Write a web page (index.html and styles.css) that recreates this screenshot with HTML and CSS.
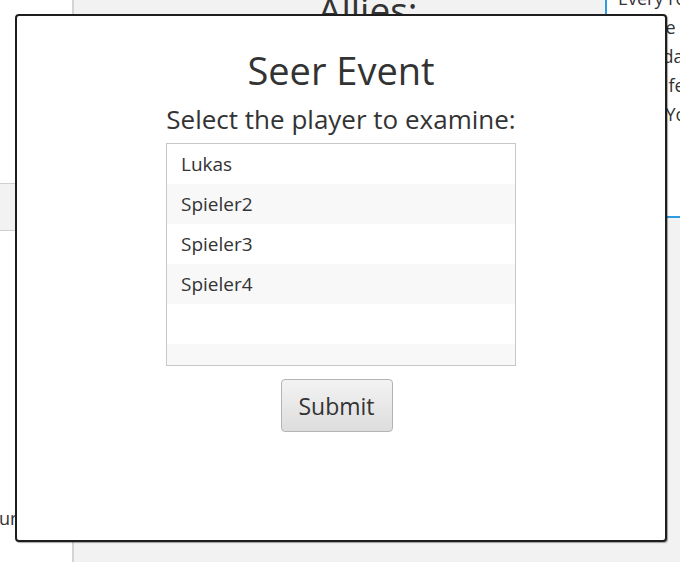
FILE: index.html
```html
<!DOCTYPE html>
<html>
<head>
<meta charset="utf-8">
<link rel="stylesheet" href="styles.css">
</head>
<body>
<div class="app">
  <aside class="sidebar">
    <div class="side-item"></div>
    <div class="side-text">Your</div>
  </aside>
  <main class="center">
    <h2 class="allies">Allies:</h2>
  </main>
  <section class="info">
    <p>Every round the<br>So, the seer<br>each day<br>other fellow<br>wins. You</p>
  </section>
</div>

<div class="dialog">
  <h1 class="dlg-title">Seer Event</h1>
  <p class="dlg-sub">Select the player to examine:</p>
  <ul class="list">
    <li>Lukas</li>
    <li>Spieler2</li>
    <li>Spieler3</li>
    <li>Spieler4</li>
    <li></li>
    <li></li>
  </ul>
  <button class="submit">Submit</button>
</div>
</body>
</html>
```
FILE: styles.css
```css
html, body {
  margin: 0;
  padding: 0;
}
body {
  width: 680px;
  height: 562px;
  overflow: hidden;
  position: relative;
  font-family: "Open Sans", "Noto Sans", sans-serif;
  color: #333;
  background: #f2f2f2;
}
.app {
  display: grid;
  grid-template-columns: 74px 531px 75px;
  height: 562px;
}
.sidebar {
  background: #fff;
  border-right: 2px solid #d4d4d4;
  display: flex;
  flex-direction: column;
  padding-top: 183px;
}
.side-item {
  height: 46px;
  background: #f2f2f2;
  border-top: 1px solid #cfcfcf;
  border-bottom: 1px solid #cfcfcf;
}
.side-text {
  margin-top: 275px;
  margin-left: -22px;
  font-size: 18px;
  white-space: nowrap;
}
.center {
  background: #f2f2f2;
}
.allies {
  margin: -16px 0 0 0;
  padding-left: 244px;
  font-weight: normal;
  font-size: 37px;
  color: #333;
}
.info {
  align-self: start;
  height: 218px;
  background: #fff;
  border-left: 2px solid #2f9be0;
  border-bottom: 2px solid #2f9be0;
  box-sizing: border-box;
  overflow: hidden;
}
.info p {
  margin: -16px 0 0 11px;
  font-size: 18px;
  line-height: 29px;
  white-space: nowrap;
  color: #333;
}
.dialog {
  position: absolute;
  left: 15px;
  top: 14px;
  width: 648px;
  height: 524px;
  background: #fff;
  border: 2px solid #1e1e1e;
  border-radius: 4px;
  box-shadow: 1px 1px 1px rgba(0,0,0,0.35);
  display: flex;
  flex-direction: column;
  align-items: center;
}
.dlg-title {
  margin: 30px 0 0 0;
  font-weight: normal;
  font-size: 38px;
  line-height: 48px;
  color: #333;
}
.dlg-sub {
  margin: 8px 0 0 0;
  font-size: 26px;
  line-height: 34px;
  color: #333;
}
.list {
  list-style: none;
  margin: 7px 0 0 0;
  padding: 0;
  width: 348px;
  height: 221px;
  border: 1px solid #c8c8c8;
  box-shadow: inset 0 0 0 1px #e4e4e4;
  overflow: hidden;
  box-sizing: content-box;
}
.list li {
  height: 40px;
  line-height: 40px;
  padding-left: 14px;
  font-size: 19px;
  color: #333;
  background: #fff;
}
.list li:nth-child(even) {
  background: #f8f8f8;
}
.submit {
  margin: 13px 9px 0 0;
  width: 112px;
  height: 53px;
  border: 1px solid #b4b4b4;
  border-radius: 4px;
  background: linear-gradient(#f3f3f3, #dddddd);
  font-family: inherit;
  font-size: 23px;
  color: #333;
  padding: 0;
}
```
